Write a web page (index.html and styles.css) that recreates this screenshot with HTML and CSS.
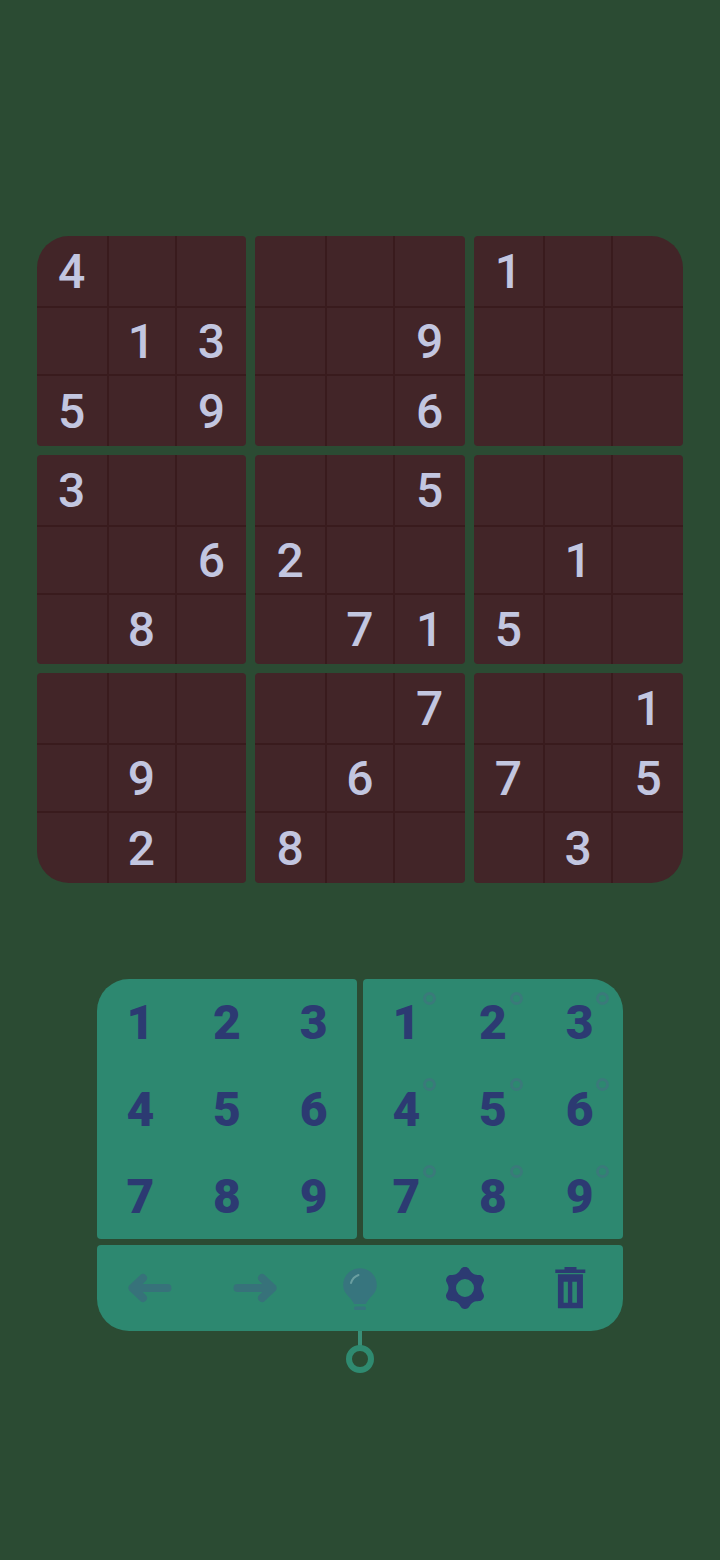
FILE: index.html
```html
<!DOCTYPE html>
<html lang="en">
<head>
    <meta charset="UTF-8">
    <meta name="viewport" content="width=device-width, initial-scale=1.0">
    <title>Sudoku</title>
    <link rel="stylesheet" href="styles.css">
</head>
<body>
    <!-- Board -->
    <div class="board">
        <div class="box box-tl">
            <div class="cell">4</div><div class="cell"></div><div class="cell"></div>
            <div class="cell"></div><div class="cell">1</div><div class="cell">3</div>
            <div class="cell">5</div><div class="cell"></div><div class="cell">9</div>
        </div>
        <div class="box">
            <div class="cell"></div><div class="cell"></div><div class="cell"></div>
            <div class="cell"></div><div class="cell"></div><div class="cell">9</div>
            <div class="cell"></div><div class="cell"></div><div class="cell">6</div>
        </div>
        <div class="box box-tr">
            <div class="cell">1</div><div class="cell"></div><div class="cell"></div>
            <div class="cell"></div><div class="cell"></div><div class="cell"></div>
            <div class="cell"></div><div class="cell"></div><div class="cell"></div>
        </div>
        <div class="box">
            <div class="cell">3</div><div class="cell"></div><div class="cell"></div>
            <div class="cell"></div><div class="cell"></div><div class="cell">6</div>
            <div class="cell"></div><div class="cell">8</div><div class="cell"></div>
        </div>
        <div class="box">
            <div class="cell"></div><div class="cell"></div><div class="cell">5</div>
            <div class="cell">2</div><div class="cell"></div><div class="cell"></div>
            <div class="cell"></div><div class="cell">7</div><div class="cell">1</div>
        </div>
        <div class="box">
            <div class="cell"></div><div class="cell"></div><div class="cell"></div>
            <div class="cell"></div><div class="cell">1</div><div class="cell"></div>
            <div class="cell">5</div><div class="cell"></div><div class="cell"></div>
        </div>
        <div class="box box-bl">
            <div class="cell"></div><div class="cell"></div><div class="cell"></div>
            <div class="cell"></div><div class="cell">9</div><div class="cell"></div>
            <div class="cell"></div><div class="cell">2</div><div class="cell"></div>
        </div>
        <div class="box">
            <div class="cell"></div><div class="cell"></div><div class="cell">7</div>
            <div class="cell"></div><div class="cell">6</div><div class="cell"></div>
            <div class="cell">8</div><div class="cell"></div><div class="cell"></div>
        </div>
        <div class="box box-br">
            <div class="cell"></div><div class="cell"></div><div class="cell">1</div>
            <div class="cell">7</div><div class="cell"></div><div class="cell">5</div>
            <div class="cell"></div><div class="cell">3</div><div class="cell"></div>
        </div>
    </div>

    <!-- Number pads -->
    <div class="controls">
        <div class="pads">
            <div class="pad pad-left">
                <div class="key">1</div><div class="key">2</div><div class="key">3</div>
                <div class="key">4</div><div class="key">5</div><div class="key">6</div>
                <div class="key">7</div><div class="key">8</div><div class="key">9</div>
            </div>
            <div class="pad pad-right">
                <div class="key note">1</div><div class="key note">2</div><div class="key note">3</div>
                <div class="key note">4</div><div class="key note">5</div><div class="key note">6</div>
                <div class="key note">7</div><div class="key note">8</div><div class="key note">9</div>
            </div>
        </div>

        <!-- Toolbar -->
        <div class="toolbar">
            <div class="tool">
                <svg class="icon" width="50" height="40" viewBox="0 0 50 40"><path d="M18 10 L7.5 20 L18 30 M7.5 20 H42.5" fill="none" stroke="#37727a" stroke-width="8" stroke-linecap="round" stroke-linejoin="round"/></svg>
            </div>
            <div class="tool">
                <svg class="icon" width="50" height="40" viewBox="0 0 50 40"><path d="M32 10 L42.5 20 L32 30 M42.5 20 H7.5" fill="none" stroke="#37727a" stroke-width="8" stroke-linecap="round" stroke-linejoin="round"/></svg>
            </div>
            <div class="tool">
                <svg class="icon" width="36" height="44" viewBox="0 0 36 44">
                    <path d="M18 2.2 C8.7 2.2 1.2 9.7 1.2 19 C1.2 26 5.5 29 8.5 32.5 C10.5 35 11.5 36.500 12 38 H24 C24.500 36.5 25.5 35 27.5 32.5 C30.5 29 34.8 26 34.8 19 C34.8 9.7 27.3 2.2 18 2.2 Z" fill="#37757e"/>
                    <path d="M9 17 C10 13.500 12.500 10.500 16.500 9" fill="none" stroke="#6a9ea0" stroke-width="2" stroke-linecap="round"/>
                    <rect x="12" y="40.500" width="12" height="3.500" rx="1.500" fill="#37757e"/>
                </svg>
            </div>
            <div class="tool">
                <svg class="icon" width="40" height="42" viewBox="0 0 40 42"><path fill-rule="evenodd" fill="#2c3a72" d="M20 0 C25 0 23.92 4.21 28.25 6.71 C32.58 9.21 35.69 6.17 38.19 10.5 C40.69 14.83 36.5 16 36.5 21 C36.5 26 40.69 27.17 38.19 31.5 C35.69 35.83 32.58 32.79 28.25 35.29 C23.92 37.79 25 42 20 42 C15 42 16.08 37.79 11.75 35.29 C7.42 32.79 4.31 35.83 1.81 31.5 C-0.69 27.17 3.5 26 3.5 21 C3.5 16 -0.69 14.83 1.81 10.5 C4.31 6.17 7.42 9.21 11.75 6.71 C16.08 4.21 15 0 20 0 Z M20 12 A9 9 0 1 0 20 30 A9 9 0 1 0 20 12 Z"/></svg>
            </div>
            <div class="tool">
                <svg class="icon" width="32" height="42" viewBox="0 0 32 42"><path fill-rule="evenodd" fill="#2c3a72" d="M10.5 0 H22.5 V2.500 H31.300 V6 H1.300 V2.500 H10.500 Z M3.900 7.300 H28.900 V41.300 H3.900 Z M9.600 14.700 V35.700 H13.900 V14.700 Z M18.300 14.700 V35.700 H22.900 V14.700 Z"/></svg>
            </div>
        </div>

        <div class="stem"></div>
        <div class="knob"></div>
    </div>
</body>
</html>
```

FILE: styles.css
```css
body {
    margin: 0;
    padding-top: 236px;
    height: 1324px;
    background-color: #2b4b33;
    font-family: "Roboto", sans-serif;
}

/* board */
.board {
    width: 646px;
    margin: 0 auto 0 37px;
    display: grid;
    grid-template-columns: repeat(3, 1fr);
    gap: 9px;
}

.box {
    display: grid;
    grid-template-columns: 71.5px 68px 1fr;
    grid-template-rows: 72px 68px 1fr;
    height: 209.5px;
    background-color: #422528;
    border-radius: 4px;
    overflow: hidden;
}

.box-tl { border-top-left-radius: 32px; }
.box-tr { border-top-right-radius: 32px; }
.box-bl { border-bottom-left-radius: 32px; }
.box-br { border-bottom-right-radius: 32px; }

.cell {
    display: flex;
    justify-content: center;
    align-items: center;
    box-sizing: border-box;
    padding-top: 1px;
    border-right: 2px solid #391b1d;
    border-bottom: 2px solid #391b1d;
    color: #c2c6e0;
    font-size: 48px;
    font-weight: 500;
}

.cell:nth-child(3n) { border-right: none; }
.cell:nth-child(n+7) { border-bottom: none; }

/* pads */
.controls {
    width: 526px;
    margin: 96px 0 0 97px;
    position: relative;
}

.pads {
    display: flex;
    gap: 6px;
}

.pad {
    width: 260px;
    height: 260px;
    display: grid;
    grid-template-columns: repeat(3, 1fr);
    grid-template-rows: repeat(3, 1fr);
    background-color: #2d8870;
    border-radius: 4px;
}

.pad-left { border-top-left-radius: 32px; }
.pad-right { border-top-right-radius: 32px; }

.key {
    display: flex;
    justify-content: center;
    align-items: center;
    position: relative;
    padding-top: 2px;
    color: #2c3a72;
    font-size: 48px;
    font-weight: 900;
}

.note::after {
    content: "";
    position: absolute;
    left: 60px;
    top: 13px;
    width: 7px;
    height: 7px;
    border: 3px solid #3a7a7a;
    border-radius: 50%;
}

/* toolbar */
.toolbar {
    margin-top: 6px;
    height: 86px;
    display: grid;
    grid-template-columns: repeat(5, 1fr);
    background-color: #2d8870;
    border-radius: 4px 4px 32px 32px;
}

.tool {
    display: flex;
    justify-content: center;
    align-items: center;
}

.icon { display: block; }

.stem {
    width: 4px;
    height: 16px;
    margin: 0 auto;
    background-color: #3a8f78;
}

.knob {
    box-sizing: border-box;
    width: 28px;
    height: 28px;
    margin: -2px auto 0;
    border: 6px solid #2f8a70;
    border-radius: 50%;
}
```
